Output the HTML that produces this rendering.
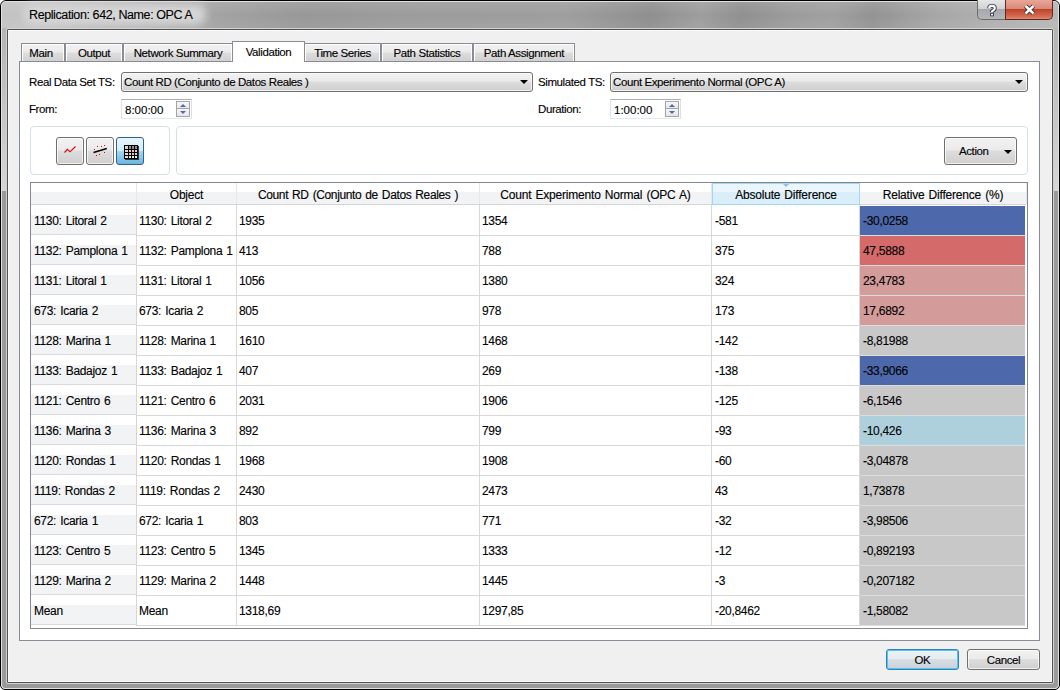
<!DOCTYPE html>
<html><head><meta charset="utf-8">
<style>
*{box-sizing:border-box;margin:0;padding:0}
html,body{width:1060px;height:690px;overflow:hidden;background:#fff}
body{font-family:"Liberation Sans",sans-serif;font-size:11.5px;letter-spacing:-0.4px;color:#000;position:relative;-webkit-text-stroke:0.12px #000}
.a{position:absolute}
#frame{left:0;top:0;width:1060px;height:690px;border:1px solid #000;border-radius:6px 6px 5px 5px;background:linear-gradient(#b8b8b8 0px,#b4b4b4 28px,#d6d6d6 190px,#9a9a9a 190px,#9a9a9a 100%)}
#hl{left:1px;top:1px;width:1058px;height:688px;border:1px solid #e2e2e2;border-radius:5px 5px 4px 4px}
#tbar{left:2px;top:2px;width:1056px;height:26px;border-radius:4px 4px 0 0;
 background:linear-gradient(100deg,#c2c2c2 0px,#c4c4c4 30px,#b4b4b4 120px,#a2a2a2 220px,#989898 300px,#9c9c9c 400px,#9e9e9e 560px,#8f8f8f 640px,#9e9e9e 690px,#909090 730px,#9c9c9c 780px,#a0a0a0 820px,#939393 860px,#a6a6a6 920px,#b0b0b0 980px,#b8b8b8 1060px)}
#glow{left:24px;top:4px;width:182px;height:21px;background:#d6d6d6;border-radius:9px;filter:blur(4px)}
#tbar2{left:2px;top:2px;width:1056px;height:26px;background:linear-gradient(rgba(255,255,255,.10),rgba(255,255,255,0) 50%,rgba(255,255,255,.06))}
#clhl{left:6px;top:28px;width:1048px;height:656px;border:1px solid #d2d2d2;border-radius:2px}
#client{left:7px;top:29px;width:1046px;height:654px;border-radius:1px;border:1px solid #525252;background:#f0f0f0;box-shadow:inset 1px 1px 0 #fafafa,inset -1px -1px 0 #fafafa}
#title{left:29px;top:8px;font-size:12.5px;letter-spacing:-0.4px;color:#000;white-space:nowrap;line-height:15px}
.txt{white-space:nowrap;line-height:15px}
.tab{top:43px;height:19px;border:1px solid #898c95;border-bottom:none;background:linear-gradient(#f2f2f2 0%,#ebebeb 45%,#dddddd 50%,#cfcfcf 100%);text-align:center;line-height:19px;box-shadow:inset 1px 1px 0 #fff,inset -1px 0 0 #fff}
.tab.sel{top:41px;height:21px;background:#fff;z-index:2;line-height:20px;border-color:#898c95;box-shadow:none}
#pane{left:19px;top:61px;width:1021px;height:580px;border:1px solid #898c95;background:#fff}
.combo{height:20px;border:1px solid #707070;border-radius:3px;background:linear-gradient(#f2f2f2 0%,#ebebeb 45%,#dddddd 50%,#cfcfcf 100%);padding-left:3px;line-height:17px;box-shadow:inset 0 0 0 1px rgba(255,255,255,.7)}
.arrow{position:absolute;width:0;height:0;border-left:4px solid transparent;border-right:4px solid transparent;border-top:4.5px solid #000}
.spin{height:20px;border:1px solid #abadb3;border-left-color:#e2e3ea;border-right-color:#dbdfe6;border-bottom-color:#e3e9ef;background:#fff;padding-left:3px;line-height:18px}
.spb{position:absolute;left:54px;width:14px;height:9px;border:1px solid #a4a4a4;background:linear-gradient(#f6f6f6,#e6e6e6)}
.sptri{position:absolute;left:3px;width:0;height:0;border-left:3px solid transparent;border-right:3px solid transparent}
.grp{border:1px solid #d5dfe5;border-radius:4px;background:#fff}
.btn{border:1px solid #707070;border-radius:3px;background:linear-gradient(#f2f2f2 0%,#ebebeb 45%,#dddddd 50%,#cfcfcf 100%);text-align:center;box-shadow:inset 0 0 0 1px rgba(255,255,255,.7)}
.hdr{background:linear-gradient(#ffffff 0px,#ffffff 9px,#f2f3f5 9px,#f2f3f5 21px,#d5d5d5 21px);border-right:1px solid #e6e7e9;height:21px!important;text-align:center;line-height:15px;font-size:12px;letter-spacing:-0.2px;word-spacing:1px}
.hdr.sel{background:linear-gradient(#eaf6fc 0px,#eaf6fc 8px,#d9eef9 8px,#d9eef9 21px);border:1px solid #9fd8f4;height:22px!important}
.hdr .ht{position:absolute;left:0;right:0;top:5px}
.hdr.sel .ht{top:4px}
.sortar{position:absolute;left:70px;top:0px;width:0;height:0;border-left:3.5px solid transparent;border-right:3.5px solid transparent;border-top:3.5px solid #8cc3e3}
.vh{background:linear-gradient(#ffffff 0px,#ffffff 10px,#f2f3f5 10px,#f2f3f5 29px,#dadada 29px)}
.tt{font-size:12px;letter-spacing:-0.3px;word-spacing:1px}
</style></head><body>
<div id="frame" class="a"></div><div id="hl" class="a"></div><div id="tbar" class="a"></div><div id="tbar2" class="a"></div><div id="glow" class="a"></div>
<div id="title" class="a">Replication: 642, Name: OPC A</div>
<!-- caption buttons -->
<div class="a" style="left:977px;top:0px;width:29px;height:20px;border:1px solid #6b6b6b;border-top:none;border-radius:0 0 0 5px;background:linear-gradient(#e6e6e6 0%,#d2d2d2 45%,#a6a8ab 50%,#b4b6b9 100%)"></div>
<svg class="a" style="left:985px;top:3px" width="14" height="14" viewBox="0 0 16 16"><g fill="none" stroke-linecap="butt"><path d="M4.8 6 Q4.8 3.3 8 3.3 Q11.2 3.3 11.2 6 Q11.2 7.6 9.2 8.6 L8 9.6 V10.4" stroke="#3a3e50" stroke-width="4.6"/><rect x="5.8" y="11.4" width="4.4" height="3.8" fill="#3a3e50" stroke="none"/><path d="M4.8 6 Q4.8 3.3 8 3.3 Q11.2 3.3 11.2 6 Q11.2 7.6 9.2 8.6 L8 9.6 V10.4" stroke="#fff" stroke-width="2.4"/><rect x="6.9" y="12.4" width="2.2" height="1.8" fill="#fff" stroke="none"/></g></svg>
<div class="a" style="left:1005px;top:0px;width:48px;height:20px;border:1px solid #5c2a22;border-top:none;border-radius:0 0 5px 0;background:linear-gradient(#eaa698 0%,#d88a78 45%,#c3432a 50%,#d26a52 85%,#e08a70 100%)"></div>
<svg class="a" style="left:1021px;top:2px" width="17" height="15" viewBox="0 0 17 15"><g stroke-linecap="butt"><path d="M4.5 4 L12.5 11.5 M12.5 4 L4.5 11.5" stroke="#3b2a2a" stroke-width="4.4"/><path d="M4.5 4 L12.5 11.5 M12.5 4 L4.5 11.5" stroke="#fff" stroke-width="2.4"/></g></svg>
<div id="clhl" class="a"></div><div id="client" class="a"></div>

<div class="a tab" style="left:21px;width:44px;padding-right:4px">Main</div>
<div class="a tab" style="left:65px;width:58px">Output</div>
<div class="a tab" style="left:123px;width:110px">Network Summary</div>
<div class="a tab" style="left:304px;width:77px">Time Series</div>
<div class="a tab" style="left:381px;width:92px">Path Statistics</div>
<div class="a tab" style="left:473px;width:102px">Path Assignment</div>
<div id="pane" class="a"></div>
<div class="a tab sel" style="left:232px;width:73px">Validation</div>

<div class="a txt" style="left:29px;top:75px">Real Data Set TS:</div>
<div class="a combo" style="left:121px;top:72px;width:412px"><span class="a txt" style="left:2px;top:2px">Count RD (Conjunto de Datos Reales )</span><span class="arrow" style="left:398px;top:7px"></span></div>
<div class="a txt" style="left:538px;top:75px">Simulated TS:</div>
<div class="a combo" style="left:610px;top:72px;width:418px"><span class="a txt" style="left:2px;top:2px">Count Experimento Normal (OPC A)</span><span class="arrow" style="left:404px;top:7px"></span></div>
<div class="a txt" style="left:29px;top:102px">From:</div>
<div class="a spin" style="left:121px;top:99px;width:71px"><span class="a txt" style="left:3px;top:3px;letter-spacing:0">8:00:00</span>
 <span class="spb" style="top:1px"><span class="sptri" style="top:2px;border-bottom:3px solid #5068b0"></span></span>
 <span class="spb" style="top:8px"><span class="sptri" style="top:2px;border-top:3px solid #5068b0"></span></span></div>
<div class="a txt" style="left:538px;top:102px">Duration:</div>
<div class="a spin" style="left:610px;top:99px;width:71px"><span class="a txt" style="left:3px;top:3px;letter-spacing:0">1:00:00</span>
 <span class="spb" style="top:1px"><span class="sptri" style="top:2px;border-bottom:3px solid #5068b0"></span></span>
 <span class="spb" style="top:8px"><span class="sptri" style="top:2px;border-top:3px solid #5068b0"></span></span></div>

<div class="a grp" style="left:30px;top:126px;width:140px;height:49px"></div>
<div class="a grp" style="left:176px;top:126px;width:852px;height:49px"></div>

<!-- chart buttons -->
<div class="a btn" style="left:56px;top:137px;width:28px;height:28px"><svg class="a" style="left:0;top:0" width="26" height="26" viewBox="0 0 26 26"><polyline points="7.5,14.5 10.5,11.3 13,13.8 18.5,8.5" fill="none" stroke="#e00000" stroke-width="1.1"/></svg></div>
<div class="a btn" style="left:86px;top:137px;width:28px;height:28px"><svg class="a" style="left:0;top:0" width="26" height="26" viewBox="0 0 26 26"><line x1="6.5" y1="14.5" x2="19.8" y2="10.5" stroke="#000" stroke-width="1.4"/><g fill="#e00000"><rect x="7" y="11" width="1" height="1"/><rect x="10" y="8" width="1" height="1"/><rect x="14" y="8" width="1" height="1"/><rect x="17" y="7" width="1" height="1"/><rect x="17" y="14" width="1" height="1"/><rect x="12" y="16" width="1" height="1"/><rect x="9" y="17" width="1" height="1"/></g></svg></div>
<div class="a" style="left:116px;top:137px;width:28px;height:28px;border:1px solid #2c628b;border-radius:3px;background:linear-gradient(#e8f5fc 0%,#d2ecf9 50%,#a4d6f0 52%,#6cb6e0 100%)"><svg class="a" style="left:0;top:0" width="26" height="26" viewBox="0 0 26 26">
<rect x="8" y="8" width="14" height="14" fill="#3a3030"/><rect x="7" y="7" width="14" height="14" fill="#000"/><rect x="8" y="8" width="3" height="3" fill="#d4d4d4"/><rect x="12" y="8" width="2" height="3" fill="#8c8c8c"/><rect x="15" y="8" width="2" height="3" fill="#8c8c8c"/><rect x="18" y="8" width="2" height="3" fill="#8c8c8c"/><rect x="8" y="12" width="3" height="2" fill="#dcdcdc"/><rect x="12" y="12" width="2" height="2" fill="#f8c4c4"/><rect x="15" y="12" width="2" height="2" fill="#f8c4c4"/><rect x="18" y="12" width="2" height="2" fill="#f8c4c4"/><rect x="8" y="15" width="3" height="2" fill="#dcdcdc"/><rect x="12" y="15" width="2" height="2" fill="#f8c4c4"/><rect x="15" y="15" width="2" height="2" fill="#f8c4c4"/><rect x="18" y="15" width="2" height="2" fill="#f8c4c4"/><rect x="8" y="18" width="3" height="2" fill="#dcdcdc"/><rect x="12" y="18" width="2" height="2" fill="#c4fafa"/><rect x="15" y="18" width="2" height="2" fill="#c4fafa"/><rect x="18" y="18" width="2" height="2" fill="#c4fafa"/>
</svg></div>

<div class="a btn" style="left:944px;top:137px;width:73px;height:28px"><span class="a txt" style="left:14px;top:6px">Action</span><span class="arrow" style="left:59px;top:12px"></span></div>

<div class="a" style="left:30px;top:182px;width:998px;height:447px;border:1px solid #828790;background:#fff"></div>
<div class="a" style="left:31px;top:204px;width:995px;height:1px;background:#d5d5d5"></div>
<div class="a hdr" style="left:31px;top:183px;width:106px;height:22px"><span class="ht"></span></div>
<div class="a hdr" style="left:137px;top:183px;width:100px;height:22px"><span class="ht">Object</span></div>
<div class="a hdr" style="left:237px;top:183px;width:243px;height:22px;letter-spacing:-0.37px"><span class="ht">Count RD (Conjunto de Datos Reales )</span></div>
<div class="a hdr" style="left:480px;top:183px;width:232px;height:22px"><span class="ht">Count Experimento Normal (OPC A)</span></div>
<div class="a hdr sel" style="left:712px;top:183px;width:148px;height:22px"><span class="sortar"></span><span class="ht">Absolute Difference</span></div>
<div class="a hdr" style="left:860px;top:183px;width:167px;height:22px"><span class="ht">Relative Difference (%)</span></div>
<div class="a vh" style="left:31px;top:205px;width:105px;height:30px"></div>
<div class="a txt tt" style="left:34px;top:214px">1130: Litoral 2</div>
<div class="a txt tt" style="left:139px;top:214px">1130: Litoral 2</div>
<div class="a txt tt" style="left:239px;top:214px">1935</div>
<div class="a txt tt" style="left:482px;top:214px">1354</div>
<div class="a txt tt" style="left:715px;top:214px">-581</div>
<div class="a" style="left:860px;top:206px;width:165px;height:29px;background:#4d68ab"></div>
<div class="a txt tt" style="left:863px;top:214px">-30,0258</div>
<div class="a" style="left:137px;top:235px;width:723px;height:1px;background:#d8d8d8"></div>
<div class="a" style="left:860px;top:235px;width:165px;height:1px;background:#dcdcdc"></div>
<div class="a vh" style="left:31px;top:235px;width:105px;height:30px"></div>
<div class="a txt tt" style="left:34px;top:244px">1132: Pamplona 1</div>
<div class="a txt tt" style="left:139px;top:244px">1132: Pamplona 1</div>
<div class="a txt tt" style="left:239px;top:244px">413</div>
<div class="a txt tt" style="left:482px;top:244px">788</div>
<div class="a txt tt" style="left:715px;top:244px">375</div>
<div class="a" style="left:860px;top:236px;width:165px;height:29px;background:#d46a6a"></div>
<div class="a txt tt" style="left:863px;top:244px">47,5888</div>
<div class="a" style="left:137px;top:265px;width:723px;height:1px;background:#d8d8d8"></div>
<div class="a" style="left:860px;top:265px;width:165px;height:1px;background:#dcdcdc"></div>
<div class="a vh" style="left:31px;top:265px;width:105px;height:30px"></div>
<div class="a txt tt" style="left:34px;top:274px">1131: Litoral 1</div>
<div class="a txt tt" style="left:139px;top:274px">1131: Litoral 1</div>
<div class="a txt tt" style="left:239px;top:274px">1056</div>
<div class="a txt tt" style="left:482px;top:274px">1380</div>
<div class="a txt tt" style="left:715px;top:274px">324</div>
<div class="a" style="left:860px;top:266px;width:165px;height:29px;background:#d49b9b"></div>
<div class="a txt tt" style="left:863px;top:274px">23,4783</div>
<div class="a" style="left:137px;top:295px;width:723px;height:1px;background:#d8d8d8"></div>
<div class="a" style="left:860px;top:295px;width:165px;height:1px;background:#dcdcdc"></div>
<div class="a vh" style="left:31px;top:295px;width:105px;height:30px"></div>
<div class="a txt tt" style="left:34px;top:304px">673: Icaria 2</div>
<div class="a txt tt" style="left:139px;top:304px">673: Icaria 2</div>
<div class="a txt tt" style="left:239px;top:304px">805</div>
<div class="a txt tt" style="left:482px;top:304px">978</div>
<div class="a txt tt" style="left:715px;top:304px">173</div>
<div class="a" style="left:860px;top:296px;width:165px;height:29px;background:#d49b9b"></div>
<div class="a txt tt" style="left:863px;top:304px">17,6892</div>
<div class="a" style="left:137px;top:325px;width:723px;height:1px;background:#d8d8d8"></div>
<div class="a" style="left:860px;top:325px;width:165px;height:1px;background:#dcdcdc"></div>
<div class="a vh" style="left:31px;top:325px;width:105px;height:30px"></div>
<div class="a txt tt" style="left:34px;top:334px">1128: Marina 1</div>
<div class="a txt tt" style="left:139px;top:334px">1128: Marina 1</div>
<div class="a txt tt" style="left:239px;top:334px">1610</div>
<div class="a txt tt" style="left:482px;top:334px">1468</div>
<div class="a txt tt" style="left:715px;top:334px">-142</div>
<div class="a" style="left:860px;top:326px;width:165px;height:29px;background:#c8c8c8"></div>
<div class="a txt tt" style="left:863px;top:334px">-8,81988</div>
<div class="a" style="left:137px;top:355px;width:723px;height:1px;background:#d8d8d8"></div>
<div class="a" style="left:860px;top:355px;width:165px;height:1px;background:#dcdcdc"></div>
<div class="a vh" style="left:31px;top:355px;width:105px;height:30px"></div>
<div class="a txt tt" style="left:34px;top:364px">1133: Badajoz 1</div>
<div class="a txt tt" style="left:139px;top:364px">1133: Badajoz 1</div>
<div class="a txt tt" style="left:239px;top:364px">407</div>
<div class="a txt tt" style="left:482px;top:364px">269</div>
<div class="a txt tt" style="left:715px;top:364px">-138</div>
<div class="a" style="left:860px;top:356px;width:165px;height:29px;background:#4d68ab"></div>
<div class="a txt tt" style="left:863px;top:364px">-33,9066</div>
<div class="a" style="left:137px;top:385px;width:723px;height:1px;background:#d8d8d8"></div>
<div class="a" style="left:860px;top:385px;width:165px;height:1px;background:#dcdcdc"></div>
<div class="a vh" style="left:31px;top:385px;width:105px;height:30px"></div>
<div class="a txt tt" style="left:34px;top:394px">1121: Centro 6</div>
<div class="a txt tt" style="left:139px;top:394px">1121: Centro 6</div>
<div class="a txt tt" style="left:239px;top:394px">2031</div>
<div class="a txt tt" style="left:482px;top:394px">1906</div>
<div class="a txt tt" style="left:715px;top:394px">-125</div>
<div class="a" style="left:860px;top:386px;width:165px;height:29px;background:#c8c8c8"></div>
<div class="a txt tt" style="left:863px;top:394px">-6,1546</div>
<div class="a" style="left:137px;top:415px;width:723px;height:1px;background:#d8d8d8"></div>
<div class="a" style="left:860px;top:415px;width:165px;height:1px;background:#dcdcdc"></div>
<div class="a vh" style="left:31px;top:415px;width:105px;height:30px"></div>
<div class="a txt tt" style="left:34px;top:424px">1136: Marina 3</div>
<div class="a txt tt" style="left:139px;top:424px">1136: Marina 3</div>
<div class="a txt tt" style="left:239px;top:424px">892</div>
<div class="a txt tt" style="left:482px;top:424px">799</div>
<div class="a txt tt" style="left:715px;top:424px">-93</div>
<div class="a" style="left:860px;top:416px;width:165px;height:29px;background:#aed0dc"></div>
<div class="a txt tt" style="left:863px;top:424px">-10,426</div>
<div class="a" style="left:137px;top:445px;width:723px;height:1px;background:#d8d8d8"></div>
<div class="a" style="left:860px;top:445px;width:165px;height:1px;background:#dcdcdc"></div>
<div class="a vh" style="left:31px;top:445px;width:105px;height:30px"></div>
<div class="a txt tt" style="left:34px;top:454px">1120: Rondas 1</div>
<div class="a txt tt" style="left:139px;top:454px">1120: Rondas 1</div>
<div class="a txt tt" style="left:239px;top:454px">1968</div>
<div class="a txt tt" style="left:482px;top:454px">1908</div>
<div class="a txt tt" style="left:715px;top:454px">-60</div>
<div class="a" style="left:860px;top:446px;width:165px;height:29px;background:#c8c8c8"></div>
<div class="a txt tt" style="left:863px;top:454px">-3,04878</div>
<div class="a" style="left:137px;top:475px;width:723px;height:1px;background:#d8d8d8"></div>
<div class="a" style="left:860px;top:475px;width:165px;height:1px;background:#dcdcdc"></div>
<div class="a vh" style="left:31px;top:475px;width:105px;height:30px"></div>
<div class="a txt tt" style="left:34px;top:484px">1119: Rondas 2</div>
<div class="a txt tt" style="left:139px;top:484px">1119: Rondas 2</div>
<div class="a txt tt" style="left:239px;top:484px">2430</div>
<div class="a txt tt" style="left:482px;top:484px">2473</div>
<div class="a txt tt" style="left:715px;top:484px">43</div>
<div class="a" style="left:860px;top:476px;width:165px;height:29px;background:#c8c8c8"></div>
<div class="a txt tt" style="left:863px;top:484px">1,73878</div>
<div class="a" style="left:137px;top:505px;width:723px;height:1px;background:#d8d8d8"></div>
<div class="a" style="left:860px;top:505px;width:165px;height:1px;background:#dcdcdc"></div>
<div class="a vh" style="left:31px;top:505px;width:105px;height:30px"></div>
<div class="a txt tt" style="left:34px;top:514px">672: Icaria 1</div>
<div class="a txt tt" style="left:139px;top:514px">672: Icaria 1</div>
<div class="a txt tt" style="left:239px;top:514px">803</div>
<div class="a txt tt" style="left:482px;top:514px">771</div>
<div class="a txt tt" style="left:715px;top:514px">-32</div>
<div class="a" style="left:860px;top:506px;width:165px;height:29px;background:#c8c8c8"></div>
<div class="a txt tt" style="left:863px;top:514px">-3,98506</div>
<div class="a" style="left:137px;top:535px;width:723px;height:1px;background:#d8d8d8"></div>
<div class="a" style="left:860px;top:535px;width:165px;height:1px;background:#dcdcdc"></div>
<div class="a vh" style="left:31px;top:535px;width:105px;height:30px"></div>
<div class="a txt tt" style="left:34px;top:544px">1123: Centro 5</div>
<div class="a txt tt" style="left:139px;top:544px">1123: Centro 5</div>
<div class="a txt tt" style="left:239px;top:544px">1345</div>
<div class="a txt tt" style="left:482px;top:544px">1333</div>
<div class="a txt tt" style="left:715px;top:544px">-12</div>
<div class="a" style="left:860px;top:536px;width:165px;height:29px;background:#c8c8c8"></div>
<div class="a txt tt" style="left:863px;top:544px">-0,892193</div>
<div class="a" style="left:137px;top:565px;width:723px;height:1px;background:#d8d8d8"></div>
<div class="a" style="left:860px;top:565px;width:165px;height:1px;background:#dcdcdc"></div>
<div class="a vh" style="left:31px;top:565px;width:105px;height:30px"></div>
<div class="a txt tt" style="left:34px;top:574px">1129: Marina 2</div>
<div class="a txt tt" style="left:139px;top:574px">1129: Marina 2</div>
<div class="a txt tt" style="left:239px;top:574px">1448</div>
<div class="a txt tt" style="left:482px;top:574px">1445</div>
<div class="a txt tt" style="left:715px;top:574px">-3</div>
<div class="a" style="left:860px;top:566px;width:165px;height:29px;background:#c8c8c8"></div>
<div class="a txt tt" style="left:863px;top:574px">-0,207182</div>
<div class="a" style="left:137px;top:595px;width:723px;height:1px;background:#d8d8d8"></div>
<div class="a" style="left:860px;top:595px;width:165px;height:1px;background:#dcdcdc"></div>
<div class="a vh" style="left:31px;top:595px;width:105px;height:30px"></div>
<div class="a txt tt" style="left:34px;top:604px">Mean</div>
<div class="a txt tt" style="left:139px;top:604px">Mean</div>
<div class="a txt tt" style="left:239px;top:604px">1318,69</div>
<div class="a txt tt" style="left:482px;top:604px">1297,85</div>
<div class="a txt tt" style="left:715px;top:604px">-20,8462</div>
<div class="a" style="left:860px;top:596px;width:165px;height:29px;background:#c8c8c8"></div>
<div class="a txt tt" style="left:863px;top:604px">-1,58082</div>
<div class="a" style="left:137px;top:625px;width:723px;height:1px;background:#d8d8d8"></div>
<div class="a" style="left:860px;top:625px;width:165px;height:1px;background:#dcdcdc"></div>
<div class="a" style="left:236px;top:205px;width:1px;height:421px;background:#d8d8d8"></div>
<div class="a" style="left:479px;top:205px;width:1px;height:421px;background:#d8d8d8"></div>
<div class="a" style="left:711px;top:205px;width:1px;height:421px;background:#d8d8d8"></div>
<div class="a" style="left:859px;top:205px;width:1px;height:421px;background:#d8d8d8"></div>
<div class="a" style="left:136px;top:205px;width:1px;height:421px;background:#d5d5d5"></div>

<div class="a btn" style="left:886px;top:649px;width:73px;height:21px;border-color:#3c7fb1;box-shadow:inset 0 0 0 1px #48c8f8;background:linear-gradient(#eef3f6 0%,#e6ecf0 45%,#d6dde3 50%,#cbd3da 100%)"><span class="txt" style="position:relative;top:3px">OK</span></div>
<div class="a btn" style="left:967px;top:649px;width:73px;height:21px"><span class="txt" style="position:relative;top:3px">Cancel</span></div>
</body></html>
